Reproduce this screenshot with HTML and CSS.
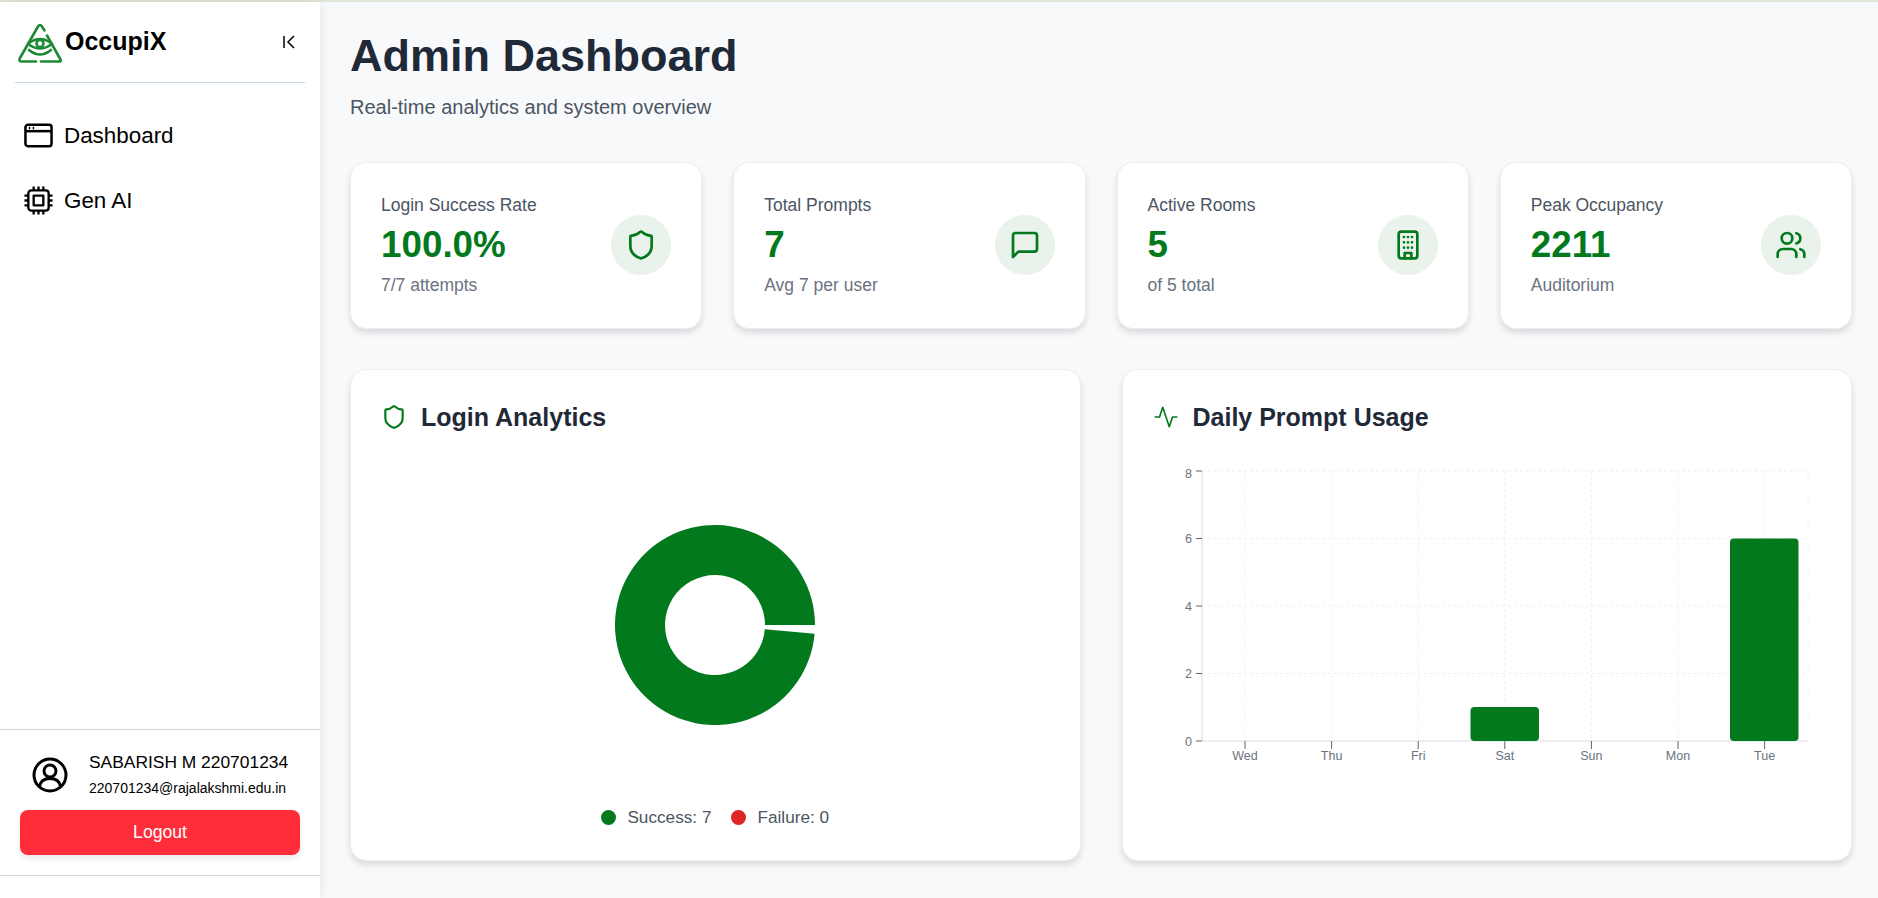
FILE: index.html
```html
<!DOCTYPE html>
<html lang="en">
<head>
  <meta charset="UTF-8" />
  <title>OccupiX Admin Dashboard</title>
  <link rel="stylesheet" href="styles.css">
</head>
<body>
  <div class="top-strip"></div>
  <div class="app">
    <aside class="sidebar">
      <div class="brand">
        <svg class="logo" viewBox="0 0 46 42" fill="none" stroke="#1c8a35" stroke-width="2.6" stroke-linecap="round" stroke-linejoin="round">
          <path d="M19 38.500H5q-4 0-2-3.500L21 3.500q2-3 4 0l2.500 4"/>
          <path d="M30 12.500l13.500 24q1 2-1 2H24"/>
          <path d="M11 21q12-10 24 0q-12 9-24 0z"/>
          <circle cx="23" cy="20.500" r="3.500"/>
          <path d="M12 27q11 9 22 0"/>
        </svg>
        <span class="brand-name">OccupiX</span>
        <svg class="collapse" viewBox="0 0 14 14" fill="none" stroke="#000" stroke-width="1.5">
          <path d="M2 1v12"/>
          <path d="M12 1L6 7l6 6"/>
        </svg>
      </div>
      <nav class="nav">
        <a class="nav-item">
          <svg viewBox="0 0 30 26" fill="none" stroke="#000" stroke-width="2.6" stroke-linejoin="round">
            <rect x="1.500" y="2" width="27" height="22" rx="2.500"/>
            <path d="M1.500 8.500h27"/>
            <path d="M5 5.200h1.500M9 5.200h1.500"/>
          </svg>
          Dashboard
        </a>
        <a class="nav-item">
          <svg viewBox="0 0 30 30" fill="none" stroke="#000" stroke-width="2.400" stroke-linejoin="round">
            <rect x="4.500" y="4.500" width="21" height="21" rx="3"/>
            <rect x="10" y="10" width="10" height="10"/>
            <path d="M10 0.500v4M15 0.500v4M20 0.500v4M10 25.500v4M15 25.500v4M20 25.500v4M0.500 10h4M0.500 15h4M0.500 20h4M25.500 10h4M25.500 15h4M25.500 20h4"/>
          </svg>
          Gen AI
        </a>
      </nav>
      <div class="user-box">
        <div class="user-row">
          <svg class="user-icon" viewBox="0 0 36 36" fill="none" stroke="#000" stroke-width="3">
            <circle cx="18" cy="18" r="16"/>
            <circle cx="18" cy="14" r="6"/>
            <path d="M7.500 29.500c1-5.500 5-8 10.500-8s9.500 2.500 10.500 8"/>
          </svg>
          <div class="user-text">
            <div class="user-name">SABARISH M 220701234</div>
            <div class="user-mail">220701234@rajalakshmi.edu.in</div>
          </div>
        </div>
        <button class="logout">Logout</button>
      </div>
    </aside>

    <main class="main">
      <h1>Admin Dashboard</h1>
      <p class="subtitle">Real-time analytics and system overview</p>

      <section class="stats">
        <div class="stat-card">
          <div>
            <div class="stat-label">Login Success Rate</div>
            <div class="stat-value">100.0%</div>
            <div class="stat-note">7/7 attempts</div>
          </div>
          <div class="stat-icon">
            <svg class="lucide" viewBox="0 0 24 24"><path d="M20 13c0 5-3.500 7.500-7.660 8.950a1 1 0 0 1-.67-.01C7.500 20.500 4 18 4 13V6a1 1 0 0 1 1-1c2 0 4.500-1.200 6.240-2.720a1.170 1.170 0 0 1 1.520 0C14.510 3.810 17 5 19 5a1 1 0 0 1 1 1z"/></svg>
          </div>
        </div>
        <div class="stat-card">
          <div>
            <div class="stat-label">Total Prompts</div>
            <div class="stat-value">7</div>
            <div class="stat-note">Avg 7 per user</div>
          </div>
          <div class="stat-icon">
            <svg class="lucide" viewBox="0 0 24 24"><path d="M21 15a2 2 0 0 1-2 2H7l-4 4V5a2 2 0 0 1 2-2h14a2 2 0 0 1 2 2z"/></svg>
          </div>
        </div>
        <div class="stat-card">
          <div>
            <div class="stat-label">Active Rooms</div>
            <div class="stat-value">5</div>
            <div class="stat-note">of 5 total</div>
          </div>
          <div class="stat-icon">
            <svg class="lucide" viewBox="0 0 24 24">
              <rect x="5" y="2" width="14" height="20" rx="2"/>
              <path d="M9.500 22v-4h5v4"/>
              <path d="M9 6h.01M12 6h.01M15 6h.01M9 10h.01M12 10h.01M15 10h.01M9 14h.01M12 14h.01M15 14h.01"/>
            </svg>
          </div>
        </div>
        <div class="stat-card">
          <div>
            <div class="stat-label">Peak Occupancy</div>
            <div class="stat-value">2211</div>
            <div class="stat-note">Auditorium</div>
          </div>
          <div class="stat-icon">
            <svg class="lucide" viewBox="0 0 24 24">
              <path d="M16 21v-2a4 4 0 0 0-4-4H6a4 4 0 0 0-4 4v2"/>
              <circle cx="9" cy="7" r="4"/>
              <path d="M22 21v-2a4 4 0 0 0-3-3.870"/>
              <path d="M16 3.130a4 4 0 0 1 0 7.750"/>
            </svg>
          </div>
        </div>
      </section>

      <section class="charts">
        <div class="chart-card">
          <h2 class="chart-title">
            <svg class="lucide title-icon" viewBox="0 0 24 24"><path d="M20 13c0 5-3.500 7.500-7.660 8.950a1 1 0 0 1-.67-.01C7.500 20.500 4 18 4 13V6a1 1 0 0 1 1-1c2 0 4.500-1.200 6.240-2.720a1.170 1.170 0 0 1 1.520 0C14.510 3.810 17 5 19 5a1 1 0 0 1 1 1z"/></svg>
            Login Analytics
          </h2>
          <div class="donut-wrap">
            <svg class="donut" viewBox="-100 -100 200 200" width="200" height="200">
              <path fill="#03791e" d="M100 0A100 100 0 1 0 99.620 8.720L49.810 4.360A50 50 0 1 1 50 0Z"/>
            </svg>
          </div>
          <div class="legend">
            <span class="legend-item"><i class="dot dot-green"></i>Success: 7</span>
            <span class="legend-item"><i class="dot dot-red"></i>Failure: 0</span>
          </div>
        </div>
        <div class="chart-card">
          <h2 class="chart-title">
            <svg class="lucide title-icon thin" viewBox="0 0 24 24"><path d="M22 12h-4l-3 9L9 3l-3 9H2"/></svg>
            Daily Prompt Usage
          </h2>
          <svg class="bars" viewBox="0 -8 668 318" width="668" height="318">
            <g class="grid-lines">
              <path d="M31 1h606M31 68.500h606M31 136h606M31 203.500h606"/>
              <path d="M74 1v270M160.600 1v270M247.200 1v270M333.800 1v270M420.400 1v270M507 1v270M593.600 1v270M637 1v270"/>
            </g>
            <path class="axis-line" d="M31 1v270M31 271h606"/>
            <rect class="bar" x="299.500" y="237" width="68.500" height="34" rx="4"/>
            <rect class="bar" x="559" y="68.500" width="68.500" height="202.500" rx="4"/>
            <path class="tick" d="M25 1h6M25 68.500h6M25 136h6M25 203.500h6M25 271h6M74 271v8M160.600 271v8M247.200 271v8M333.800 271v8M420.400 271v8M507 271v8M593.600 271v8"/>
            <g class="tick-y">
              <text x="21" y="8">8</text>
              <text x="21" y="73">6</text>
              <text x="21" y="140.500">4</text>
              <text x="21" y="208">2</text>
              <text x="21" y="275.500">0</text>
            </g>
            <g class="tick-x">
              <text x="74" y="290">Wed</text>
              <text x="160.600" y="290">Thu</text>
              <text x="247.200" y="290">Fri</text>
              <text x="333.800" y="290">Sat</text>
              <text x="420.400" y="290">Sun</text>
              <text x="507" y="290">Mon</text>
              <text x="593.600" y="290">Tue</text>
            </g>
          </svg>
        </div>
      </section>
    </main>
  </div>
</body>
</html>
```

FILE: styles.css
```css
* { box-sizing: border-box; }
html, body { margin: 0; height: 100%; overflow: hidden; }
body { font-family: "Liberation Sans", Arial, sans-serif; background: #f8f9fb; color: #000; }

.top-strip { height: 2px; background: #e1e8d9; }
.app { display: flex; height: 896px; }

/* sidebar */
.sidebar { width: 320px; flex: none; background: #fff; display: flex; flex-direction: column; box-shadow: 0 0 10px rgba(0,0,0,0.1); position: relative; }
.brand { height: 81px; margin: 0 15px; padding: 0 9px 0 2px; display: flex; align-items: center; border-bottom: 1px solid #c6d5e3; }
.logo { width: 46px; height: 42px; margin-top: 4px; flex: none; }
.brand-name { font-size: 25px; font-weight: bold; margin-left: 2px; margin-top: -1px; }
.collapse { width: 14px; height: 14px; margin-left: auto; margin-top: -1px; }
.nav { padding: 20px 0 0 24px; flex: 1; }
.nav-item { display: flex; align-items: center; gap: 11px; height: 65px; font-size: 22.4px; }
.nav-item svg { width: 29px; height: 29px; flex: none; }
.user-box { border-top: 1px solid #cbd5e0; border-bottom: 1px solid #cbd5e0; margin-bottom: 22px; padding: 19px 20px 20px; }
.user-row { display: flex; align-items: center; margin-bottom: 10px; }
.user-icon { width: 36px; height: 36px; margin-left: 12px; flex: none; }
.user-text { margin-left: 21px; }
.user-name { font-size: 17.4px; line-height: 27px; }
.user-mail { font-size: 14px; line-height: 24px; }
.logout { display: block; width: 100%; height: 45px; border: none; border-radius: 8px; background: #ff2d3a; color: #fff; font: inherit; font-size: 17.6px; box-shadow: 0 4px 6px rgba(0,0,0,0.08); }

/* main */
.main { flex: 1; min-width: 0; padding: 0 26px 0 30px; }
h1 { margin: 28px 0 0; font-size: 45px; line-height: 52px; color: #1f2937; }
.subtitle { margin: 13px 0 0; font-size: 20px; line-height: 24px; color: #4b5563; }
.stats { display: grid; grid-template-columns: repeat(4, minmax(0, 1fr)); gap: 31px; margin-top: 43px; }
.stat-card { height: 167px; padding: 0 30px 2px; background: #fff; border: 1px solid #edeef1; border-radius: 16px; box-shadow: 0 4px 6px rgba(0,0,0,0.12); display: flex; align-items: center; justify-content: space-between; }
.stat-label { font-size: 17.5px; line-height: 20px; color: #4b5563; }
.stat-value { font-size: 36.8px; font-weight: bold; line-height: 40px; margin: 10px 0; color: #03791e; }
.stat-note { font-size: 17.5px; line-height: 20px; color: #6b7280; }
.stat-icon { width: 60px; height: 60px; border-radius: 50%; background: #e9f3eb; display: flex; align-items: center; justify-content: center; }
.lucide { width: 32px; height: 32px; fill: none; stroke: #03791e; stroke-width: 2; stroke-linecap: round; stroke-linejoin: round; }

.charts { display: grid; grid-template-columns: repeat(2, minmax(0, 1fr)); gap: 41px; margin-top: 40px; }
.chart-card { height: 492px; background: #fff; border: 1px solid #edeef1; border-radius: 16px; box-shadow: 0 4px 6px rgba(0,0,0,0.12); padding: 30px 30px 0; display: flex; flex-direction: column; }
.chart-title { margin: 0; height: 34px; display: flex; align-items: center; font-size: 25px; color: #1f2937; gap: 14px; }
.title-icon { width: 26px; height: 26px; flex: none; }
.thin { stroke-width: 1.5; }
.donut-wrap { display: flex; justify-content: center; margin-top: 91px; }
.donut { display: block; }
.legend { display: flex; justify-content: center; gap: 20px; margin-top: 83px; font-size: 17.2px; color: #4b5563; }
.legend-item { display: flex; align-items: center; gap: 11px; line-height: 18px; }
.dot { width: 15px; height: 15px; border-radius: 50%; }
.dot-green { background: #03791e; }
.dot-red { background: #dc2626; }

.bars { display: block; margin-top: 28px; margin-left: 18px; flex: none; }
.grid-lines path { fill: none; stroke: #f0f0f0; stroke-dasharray: 3 3; }
.axis-line { fill: none; stroke: #e5e7eb; stroke-width: 1.5; }
.tick { fill: none; stroke: #666; }
.bar { fill: #03791e; }
.tick-y text { font-size: 12.5px; fill: #6b7280; text-anchor: end; }
.tick-x text { font-size: 12.5px; fill: #6b7280; text-anchor: middle; }
```
